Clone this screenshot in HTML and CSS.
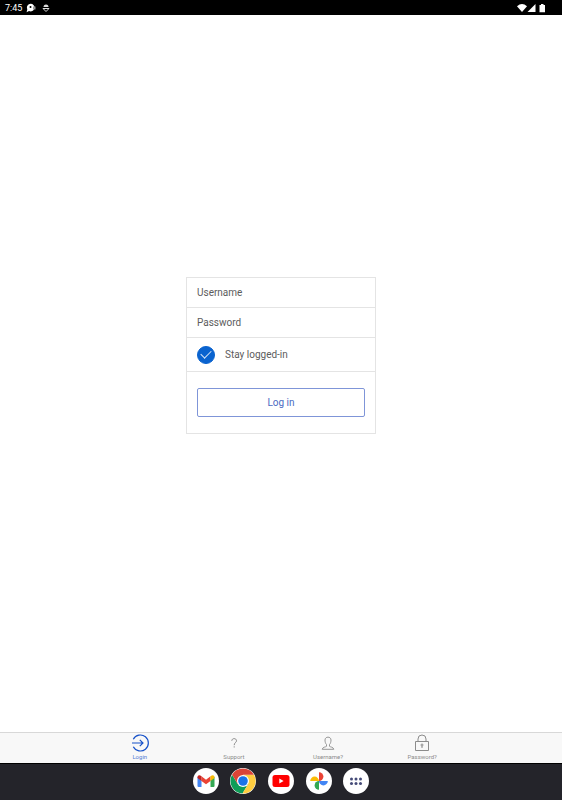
FILE: index.html
```
<!DOCTYPE html>
<html lang="en">
<head>
    <meta charset="UTF-8">
    <meta name="viewport" content="width=device-width, initial-scale=1.0">
    <title>Log in</title>
    <link rel="stylesheet" href="styles.css">
</head>
<body>

    <header class="status-bar">
        <span class="time">7:45</span>
        <svg class="status-chat" viewBox="0 0 10 10" width="10" height="10">
            <path d="M4.6 .8a3.8 3.8 0 1 1-1.6 7.200L.6 9.200l.7-3A3.800 3.800 0 0 1 4.600.8z" fill="#fff"/>
            <path d="M7 3.500h2.500v3H7z" fill="#999"/>
            <circle cx="4.500" cy="4" r="1" fill="#000"/>
        </svg>
        <svg class="status-bug" viewBox="0 0 8 10" width="8" height="10">
            <path d="M1.500 4a2.500 2.500 0 0 1 5 0z" fill="#ddd"/>
            <path d="M1 5.500h6L4 8.500z" fill="none" stroke="#ddd"/>
        </svg>
        <svg class="status-signal" viewBox="0 0 30 10" width="30" height="10">
            <path d="M0 3.200Q5 -1.400 10 3.200L5 9z" fill="#fff"/>
            <path d="M10.500 9h8V1z" fill="#fff"/>
            <path d="M22.500 2h1.500V1h2.500v1H28v7.200h-5.500z" fill="#fff"/>
        </svg>
    </header>

    <main class="content">
        <form class="login-form">
            <input class="field" type="text" placeholder="Username" aria-label="Username">
            <input class="field" type="password" placeholder="Password" aria-label="Password">
            <div class="stay-row">
                <input class="check" type="checkbox" id="stay" checked>
                <label for="stay">Stay logged-in</label>
            </div>
            <div class="submit-row">
                <button class="login-button" type="button">Log in</button>
            </div>
        </form>
    </main>

    <nav class="tab-bar">
        <div class="tabs">
            <a class="tab active" href="#login">
                <svg viewBox="0 0 20 20" width="20" height="20" fill="none" stroke="#1550c8" stroke-width="1.200">
                    <path d="M3.300 6.200A8 8 0 1 1 3.300 13.800"/>
                    <path d="M2 10h11M9.800 6.800l3.200 3.200-3.200 3.200"/>
                </svg>
                <span>Login</span>
            </a>
            <a class="tab" href="#support">
                <svg viewBox="0 0 20 20" width="20" height="20" fill="none" stroke="currentColor">
                    <path d="M7.800 7.800C7.800 4.900 12.500 4.900 12.500 7.800C12.500 9.500 10.200 9.700 10.200 12.200M10.200 13.300v1.200"/>
                </svg>
                <span>Support</span>
            </a>
            <a class="tab" href="#username">
                <svg viewBox="0 0 20 20" width="20" height="20" fill="none" stroke="currentColor" stroke-width=".9">
                    <path d="M8.500 11.500C7.300 10.300 7 8.500 7 7C7 3.200 13 3.200 13 7C13 8.500 12.700 10.300 11.500 11.500V13.300C12 14 15.500 14 15.800 16.300H4.200C4.500 14 8 14 8.500 13.300z"/>
                </svg>
                <span>Username?</span>
            </a>
            <a class="tab" href="#password">
                <svg viewBox="0 0 20 20" width="20" height="20" fill="none" stroke="currentColor">
                    <path d="M3.500 8.500h13v9h-13zM6 8.500V6a4 4 0 0 1 8 0v2.500"/>
                    <circle cx="10" cy="12" r="1"/>
                    <path d="M10 13v2"/>
                </svg>
                <span>Password?</span>
            </a>
        </div>
    </nav>

    <footer class="dock">
        <div class="apps">
            <a class="app" href="#gmail" aria-label="Gmail">
                <svg viewBox="0 0 26 26">
                    <path d="M4.500 8.800v9.200q0 1 1 1H8.500v-7z" fill="#4285f4"/>
                    <path d="M21.500 8.800v9.200q0 1-1 1H17.500v-7z" fill="#34a853"/>
                    <path d="M8.500 8.300L13 11.700l4.500-3.400v4.600L13 16.300l-4.500-3.400z" fill="#ea4335"/>
                    <path d="M4.500 9.600C4.500 7 6.500 6.600 8.500 8.300v4.600l-4-3z" fill="#c5221f"/>
                    <path d="M21.500 9.600C21.500 7 19.500 6.600 17.500 8.300v4.600l4-3z" fill="#fbbc04"/>
                </svg>
            </a>
            <a class="app" href="#chrome" aria-label="Chrome">
                <svg viewBox="0 0 26 26">
                    <path d="M2.100 6.700A12.600 12.600 0 0 0 12.500 25.600L18.200 16 13 13 7.800 16z" fill="#0f9d58"/>
                    <path d="M23.900 6.700A12.600 12.600 0 0 1 12.500 25.600L18.200 16 13 6.700z" fill="#ffcd40"/>
                    <path d="M2.100 6.700A12.600 12.600 0 0 1 23.900 6.700H13L7.800 16z" fill="#db4437"/>
                    <circle cx="13" cy="13" r="6" fill="#fff"/>
                    <circle cx="13" cy="13" r="4.800" fill="#1a73e8"/>
                </svg>
            </a>
            <a class="app" href="#youtube" aria-label="YouTube">
                <svg viewBox="0 0 26 26">
                    <rect x="4.500" y="7" width="17" height="12" rx="2.500" fill="#f00"/>
                    <path d="M11.300 10.500v5l4.300-2.500z" fill="#fff"/>
                </svg>
            </a>
            <a class="app" href="#photos" aria-label="Photos">
                <svg viewBox="0 0 26 26">
                    <path d="M13 13V4.200a4.400 4.400 0 0 1 0 8.800z" fill="#ea4335"/>
                    <path d="M13 13h8.800a4.400 4.400 0 0 1-8.800 0z" fill="#4285f4"/>
                    <path d="M13 13v8.800a4.400 4.400 0 0 1 0-8.800z" fill="#34a853"/>
                    <path d="M13 13H4.200a4.400 4.400 0 0 1 8.800 0z" fill="#fbbc04"/>
                </svg>
            </a>
            <a class="app" href="#apps" aria-label="All apps">
                <svg viewBox="0 0 26 26" fill="#454b78">
                    <circle cx="8.500" cy="11" r="1.500"/>
                    <circle cx="13" cy="11" r="1.500"/>
                    <circle cx="17.500" cy="11" r="1.500"/>
                    <circle cx="8.500" cy="15.500" r="1.500"/>
                    <circle cx="13" cy="15.500" r="1.500"/>
                    <circle cx="17.500" cy="15.500" r="1.500"/>
                </svg>
            </a>
        </div>
    </footer>

</body>
</html>
```
FILE: styles.css
```
* {
    box-sizing: border-box;
    margin: 0;
    padding: 0;
    font-family: Roboto, Arial, sans-serif;
}

body {
    display: flex;
    flex-direction: column;
    min-height: 100vh;
    background: #fff;
    color: #5c5c5c;
    font-size: 10px;
}

svg {
    display: block;
}

a {
    color: inherit;
    text-decoration: none;
}

.status-bar {
    display: flex;
    align-items: center;
    height: 15px;
    padding: 0 15px 0 5px;
    background: #000;
    color: #fff;
    font-size: 9px;
}

.status-chat {
    margin-left: 4px;
}

.status-bug {
    margin-left: 6px;
}

.status-signal {
    margin-left: auto;
}

.content {
    flex: 1;
    display: flex;
    align-items: center;
    justify-content: center;
    padding-bottom: 36px;
}

.login-form {
    width: 190px;
    border: 1px solid #e4e4e4;
}

.field {
    display: block;
    width: 100%;
    height: 30px;
    padding: 0 10px;
    border: none;
    border-bottom: 1px solid #e4e4e4;
    background: none;
    color: #5c5c5c;
    font-size: 10px;
    outline: none;
}

.field::placeholder {
    color: #5c5c5c;
    opacity: 1;
}

.stay-row {
    display: flex;
    align-items: center;
    gap: 10px;
    height: 34px;
    padding: 0 10px;
    border-bottom: 1px solid #e4e4e4;
}

.check {
    display: grid;
    place-items: center;
    appearance: none;
    width: 18px;
    height: 18px;
    border-radius: 50%;
    border: 1px solid #0a63cf;
}

.check:checked {
    background: #0a63cf;
}

.check:checked::before {
    content: "";
    width: 9px;
    height: 5px;
    margin-bottom: 3px;
    border-left: 1px solid #d5e4f7;
    border-bottom: 1px solid #d5e4f7;
    transform: rotate(-45deg);
}

.submit-row {
    padding: 16px 10px;
}

.login-button {
    display: block;
    width: 100%;
    height: 29px;
    border: 1px solid #7f95d8;
    border-radius: 2px;
    background: #fff;
    color: #4a6bc2;
    font-size: 10px;
    cursor: pointer;
}

.tab-bar {
    height: 31px;
    border-top: 1px solid #d8d8d8;
    background: #f8f8f8;
}

.tabs {
    display: grid;
    grid-template-columns: repeat(4, 1fr);
    width: 67%;
    margin: auto;
}

.tab {
    display: flex;
    flex-direction: column;
    align-items: center;
    color: #8c8c8c;
    font-size: 6px;
    line-height: 8px;
}

.tab.active {
    color: #5580d4;
}

.dock {
    display: flex;
    align-items: center;
    justify-content: center;
    height: 37px;
    padding-bottom: 2px;
    border-top: 1px solid #000;
    background: #24242a;
}

.apps {
    display: grid;
    grid-template-columns: repeat(5, 1fr);
    justify-items: center;
    width: 188px;
}

.app {
    width: 26px;
    height: 26px;
    border-radius: 50%;
    background: #fff;
    overflow: hidden;
}
```
